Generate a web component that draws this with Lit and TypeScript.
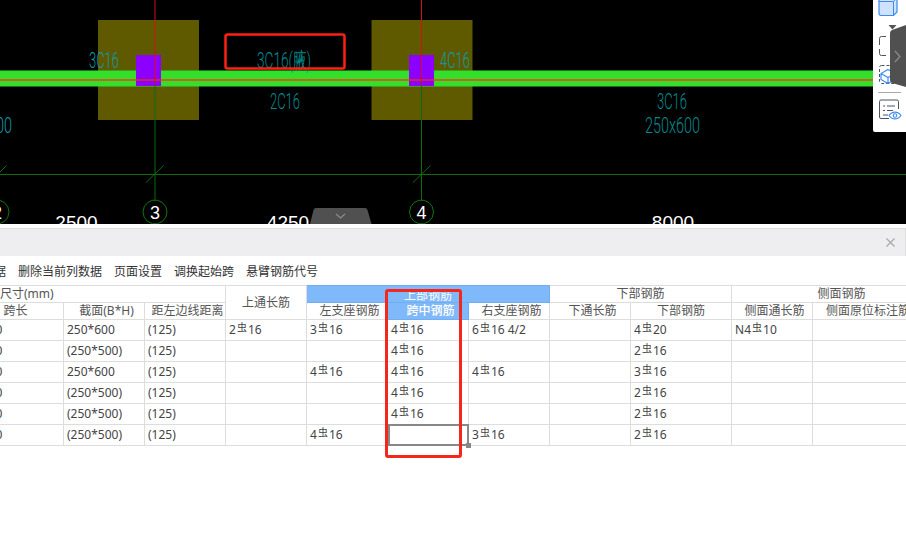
import { LitElement, html, css, svg } from "lit";
import { customElement } from "lit/decorators.js";

type Row = [string, string, string, string, string, string, string, string, string, string, string];

const ROWS: Row[] = [
    ["2500", "250*600", "(125)", "2虫16", "3虫16", "4虫16", "6虫16 4/2", "", "4虫20", "N4虫10", ""],
    ["4250", "(250*500)", "(125)", "", "", "4虫16", "", "", "2虫16", "", ""],
    ["8000", "250*600", "(125)", "", "4虫16", "4虫16", "4虫16", "", "3虫16", "", ""],
    ["4250", "(250*500)", "(125)", "", "", "4虫16", "", "", "2虫16", "", ""],
    ["2500", "(250*500)", "(125)", "", "", "4虫16", "", "", "2虫16", "", ""],
    ["8000", "(250*500)", "(125)", "", "4虫16", "", "3虫16", "", "2虫16", "", ""],
];

const WIDTHS = [96, 81, 81, 81, 81, 81, 81, 81, 101, 81, 106, 33];

@customElement("app-root")
export class AppRoot extends LitElement {
    // CAD label squeezed to the narrow look of the drawing font
    label(x: number, y: number, w: number, text: string, cls = "cad") {
        return svg`<text class=${cls} x=${x} y=${y} textLength=${w} lengthAdjust="spacingAndGlyphs">${text}</text>`;
    }

    axis(cx: number, cy: number, name: string) {
        const pts = Array.from({ length: 14 }, (_, i) => {
            const a = (i / 14) * Math.PI * 2;
            return `${cx + 12 * Math.cos(a)},${cy + 12 * Math.sin(a)}`;
        }).join(" ");
        return svg`<polygon class="axis" points=${pts}></polygon>
            <text class="axis-num" x=${cx} y=${cy + 6.5}>${name}</text>`;
    }

    column(x: number) {
        return svg`<rect class="olive" x=${x - 57} y="20" width="101" height="100"></rect>`;
    }

    renderCanvas() {
        return html`<svg class="drawing" width="906" height="224" viewBox="0 0 906 224">
            ${this.column(155)}
            ${this.column(428.5)}
            <rect class="beam" x="0" y="70.5" width="873" height="16"></rect>
            <rect class="purple" x="136" y="55" width="25" height="31"></rect>
            <rect class="purple" x="409" y="55" width="25" height="31"></rect>
            <rect class="center" x="0" y="79" width="873" height="2"></rect>
            <rect class="center-over" x="136" y="79" width="25" height="2"></rect>
            <rect class="center-over" x="409" y="79" width="25" height="2"></rect>
            <line class="grid" x1="0" y1="174.5" x2="906" y2="174.5"></line>
            <line class="grid" x1="155" y1="84" x2="155" y2="200"></line>
            <line class="grid" x1="421.5" y1="84" x2="421.5" y2="200"></line>
            <line class="grid" x1="146" y1="182.5" x2="163.5" y2="165.5"></line>
            <line class="grid" x1="413" y1="182.5" x2="430.5" y2="165.5"></line>
            <line class="grid" x1="-2" y1="174" x2="6.5" y2="165.5"></line>
            <line class="axis-red" x1="155" y1="0" x2="155" y2="84"></line>
            <line class="axis-red" x1="421.5" y1="0" x2="421.5" y2="84"></line>
            ${this.axis(-3, 212, "2")}
            ${this.axis(155, 212, "3")}
            ${this.axis(421.5, 212, "4")}
            ${this.label(89, 68, 30, "3C16", "cad bright")}
            ${this.label(440, 68, 30, "4C16", "cad bright")}
            ${this.label(257, 68, 54, "3C16(腋)")}
            ${this.label(270, 109, 30, "2C16")}
            ${this.label(657, 109, 30, "3C16")}
            ${this.label(645, 133, 55, "250x600")}
            ${this.label(-43, 133, 55, "250x600", "cad bright")}
            <text class="dim" x="76.5" y="229">2500</text>
            <text class="dim" x="288" y="229">4250</text>
            <text class="dim" x="673" y="229">8000</text>
            <rect class="mark" x="225.5" y="34.5" width="119" height="34" rx="2"></rect>
        </svg>`;
    }

    renderSidebar() {
        return html`<div class="sidebar">
            <svg width="33" height="132" viewBox="0 0 33 132">
                <path class="cube" d="M7 -2h14l3 -2v16l-3.500 3.500H8a2 2 0 0 1-2-2V-1z"></path>
                <path class="cube-line" d="M6 1.500h14.500V16M20.500 1.500L24 -2"></path>
                <path class="caret" d="M15.500 25h8l-4 4.500z"></path>
                <path class="ink" d="M13 36.500H8.500a2 2 0 0 0-2 2V45M6.500 49v4.500a2 2 0 0 0 2 2H13"></path>
                <rect class="dashed" x="6.500" y="65.500" width="18" height="18" rx="2"></rect>
                <path class="hex" d="M15 69.500l7 4v6l-7 4-7-4v-6zM8 73.500l7 4 7-4M15 77.500v6"></path>
                <line class="rule" x1="5" y1="92.500" x2="28" y2="92.500"></line>
                <path class="ink" d="M25.500 109V101.500a1.500 1.500 0 0 0-1.500-1.500H8a1.500 1.500 0 0 0-1.500 1.500V117a1.500 1.500 0 0 0 1.500 1.500H16"></path>
                <path class="ink" d="M10 106h2M14 106h8M10 110.500h2M14 110.500h6M10 115h5"></path>
                <path class="eye" d="M16 115.500c3-4.500 9-4.500 12 0c-3 4.500-9 4.500-12 0z"></path>
                <circle class="eye" cx="22" cy="115.500" r="1.800"></circle>
            </svg>
            <svg class="side-tab" width="16" height="62" viewBox="0 0 16 62">
                <path class="tab" d="M0 8Q0 6 2 5L16 0V62L2 58Q0 57 0 55z"></path>
                <path class="chev" d="M5 26l5 5.500-5 5.500"></path>
            </svg>
        </div>`;
    }

    // the rebar grade mark sits raised between the count and the diameter
    bar(value: string) {
        const parts = value.split("虫");
        if (parts.length < 2) return value;
        return html`${parts[0]}<span class="grade">虫</span>${parts[1]}`;
    }

    renderTable() {
        return html`<table>
            <colgroup>${WIDTHS.map((w) => html`<col style="width:${w}px" />`)}</colgroup>
            <thead>
                <tr class="head-a">
                    <th class="size" colspan="3">尺寸(mm)</th>
                    <th rowspan="2">上通长筋</th>
                    <th class="active" colspan="3"><span class="clipped">上部钢筋</span></th>
                    <th colspan="2">下部钢筋</th>
                    <th colspan="3">侧面钢筋</th>
                </tr>
                <tr class="head-b">
                    <th class="plain">跨长</th>
                    <th>截面(B*H)</th>
                    <th>距左边线距离</th>
                    <th>左支座钢筋</th>
                    <th class="active strong">跨中钢筋</th>
                    <th>右支座钢筋</th>
                    <th>下通长筋</th>
                    <th class="plain">下部钢筋</th>
                    <th>侧面通长筋</th>
                    <th>侧面原位标注筋</th>
                    <th></th>
                </tr>
            </thead>
            <tbody>
                ${ROWS.map(
                    (row, r) => html`<tr>
                        ${row.map(
                            (cell, c) => html`<td class=${c === 0 ? "span" : ""}>
                                ${this.bar(cell)}
                                ${r === 5 && c === 5 ? html`<div class="selected"><i></i></div>` : ""}
                            </td>`
                        )}
                        <td></td>
                    </tr>`
                )}
            </tbody>
        </table>`;
    }

    render() {
        return html`<section class="canvas">
                ${this.renderCanvas()} ${this.renderSidebar()}
                <svg class="bottom-tab" width="62" height="16" viewBox="0 0 62 16">
                    <path class="tab" d="M0 16L3.500 2Q4 0 6 0H55Q57 0 57.500 2L61.500 16z"></path>
                    <path class="chev" d="M26 6l4.500 4 4.500-4"></path>
                </svg>
            </section>
            <section class="panel">
                <div class="title">
                    <svg width="9" height="9" viewBox="0 0 9 9"><path d="M0.500 0.500l8 8M8.500 0.500l-8 8"></path></svg>
                </div>
                <div class="actions">
                    <span class="cut">删除当前行数据</span>
                    <span>删除当前列数据</span>
                    <span>页面设置</span>
                    <span>调换起始跨</span>
                    <span>悬臂钢筋代号</span>
                </div>
                <div class="grid-wrap">
                    ${this.renderTable()}
                    <div class="highlight"></div>
                </div>
            </section>`;
    }

    static styles = css`
        :host {
            display: flex;
            flex-direction: column;
            width: 906px;
            height: 541px;
            overflow: hidden;
            background: #fff;
            color: #444;
            font-family: "Noto Sans", "Noto Sans CJK SC", sans-serif;
            font-size: 12px;
        }

        .canvas {
            position: relative;
            flex: 0 0 224px;
            background: #000;
            overflow: hidden;
        }

        .drawing {
            display: block;
        }

        .olive {
            fill: #5f5a00;
        }
        .beam {
            fill: #32e02c;
        }
        .purple {
            fill: #8b00ff;
        }
        .center {
            fill: #c8641e;
        }
        .center-over {
            fill: #d0204f;
        }
        .grid {
            stroke: #0d6d0d;
            stroke-width: 1;
        }
        .axis-red {
            stroke: #d01212;
            stroke-width: 1;
        }
        .axis {
            fill: #000;
            stroke: #0f7a0f;
            stroke-width: 1;
        }
        .axis-num {
            fill: #fff;
            font-family: "Liberation Sans", sans-serif;
            font-size: 18px;
            text-anchor: middle;
        }
        .cad {
            fill: #008a8c;
            font-family: Roboto, sans-serif;
            font-weight: 300;
            font-size: 22px;
        }
        .cad.bright {
            fill: #0a9aa6;
        }
        .dim {
            fill: #fff;
            font-family: "Liberation Sans", sans-serif;
            font-size: 19px;
            text-anchor: middle;
        }
        .mark {
            fill: none;
            stroke: #ff2015;
            stroke-width: 2.5;
        }

        .sidebar {
            position: absolute;
            top: 0;
            left: 873px;
            width: 33px;
            height: 132px;
            background: #fff;
            border-bottom-left-radius: 2px;
        }
        .sidebar svg {
            display: block;
        }
        .sidebar .side-tab {
            position: absolute;
            top: 25px;
            left: 17px;
        }
        .bottom-tab {
            position: absolute;
            left: 310px;
            bottom: 0;
        }
        .tab {
            fill: #505050;
        }
        .chev {
            fill: none;
            stroke: #8c8c8c;
            stroke-width: 1.2;
        }
        .cube {
            fill: #cfe2fb;
            stroke: #3d8bf0;
            stroke-width: 1.2;
        }
        .cube-line {
            fill: none;
            stroke: #3d8bf0;
        }
        .caret {
            fill: #555;
        }
        .ink {
            fill: none;
            stroke: #4a5263;
            stroke-width: 1;
        }
        .dashed {
            fill: none;
            stroke: #4a5263;
            stroke-dasharray: 3 2;
        }
        .hex {
            fill: #fff;
            stroke: #3d8bf0;
            stroke-width: 1.2;
        }
        .rule {
            stroke: #aaa;
        }
        .eye {
            fill: #fff;
            stroke: #3d8bf0;
            stroke-width: 1.1;
        }

        .panel {
            display: flex;
            flex-direction: column;
            flex: 1;
            min-height: 0;
            padding-top: 4px;
        }

        .title {
            display: flex;
            align-items: center;
            justify-content: flex-end;
            flex: 0 0 28px;
            box-sizing: border-box;
            padding-right: 10px;
            background: #eeeef0;
            border-top: 1px solid #ddd;
            border-right: 1px solid #ddd;
        }
        .title svg {
            stroke: #a8a8a8;
            stroke-width: 1.2;
            fill: none;
        }

        .actions {
            display: flex;
            align-items: center;
            gap: 12px;
            flex: 0 0 29px;
            box-sizing: border-box;
            padding-top: 1px;
            color: #333;
            white-space: nowrap;
        }
        .actions .cut {
            margin-left: -78px;
        }

        .grid-wrap {
            position: relative;
            flex: 1;
            min-height: 0;
            overflow: hidden;
        }

        table {
            table-layout: fixed;
            width: 984px;
            margin-left: -33px;
            border-collapse: collapse;
        }
        th,
        td {
            padding: 0;
            border: 1px solid #ddd;
            overflow: hidden;
            white-space: nowrap;
        }
        th {
            font-weight: 400;
            color: #555;
            line-height: 14px;
        }
        td {
            position: relative;
            height: 20px;
            padding-left: 3px;
            line-height: 18px;
            color: #444;
        }
        td.span {
            padding-left: 7px;
        }
        .head-a th {
            height: 16px;
        }
        .head-b th {
            height: 16px;
            padding-left: 5px;
        }
        .head-b th.plain {
            padding-left: 0;
        }
        th.size {
            padding-left: 32px;
            text-align: left;
        }
        th.active {
            background: #7fb9f9;
            border-color: #6faef5;
            color: #fff;
        }
        th.strong {
            font-weight: 500;
        }
        .clipped {
            display: block;
            height: 11px;
            margin-top: 5px;
            overflow: hidden;
            line-height: 10px;
        }

        .grade {
            display: inline-block;
            width: 12px;
            font-family: "Noto Sans CJK SC", sans-serif;
            font-size: 10px;
            line-height: 10px;
            text-align: center;
            vertical-align: 3px;
        }

        .selected {
            position: absolute;
            inset: -1px -1px -1px 0;
            border: 2px solid #888;
        }
        td:has(.selected) {
            overflow: visible;
        }
        .selected i {
            position: absolute;
            right: -4px;
            bottom: -4px;
            width: 5px;
            height: 5px;
            background: #888;
        }

        .highlight {
            position: absolute;
            top: 4px;
            left: 385px;
            width: 77px;
            height: 169px;
            box-sizing: border-box;
            border: 3px solid #f5261c;
            border-radius: 3px;
        }
    `;
}
